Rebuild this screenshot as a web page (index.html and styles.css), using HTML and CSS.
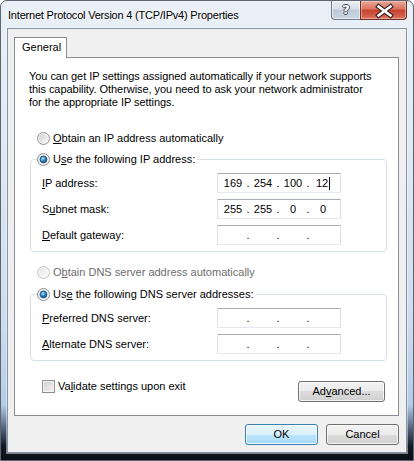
FILE: index.html
```html
<!DOCTYPE html>
<html>
<head>
<meta charset="utf-8">
<title>Internet Protocol Version 4 (TCP/IPv4) Properties</title>
<link rel="stylesheet" href="styles.css">
</head>
<body>
<svg class="defs" width="0" height="0" aria-hidden="true">
  <defs>
    <linearGradient id="rfill" x1="0" y1="0" x2="1" y2="1">
      <stop offset="0" stop-color="#cfcfcf"/>
      <stop offset="1" stop-color="#fbfbfb"/>
    </linearGradient>
    <linearGradient id="rfilld" x1="0" y1="0" x2="1" y2="1">
      <stop offset="0" stop-color="#e6e6e6"/>
      <stop offset="1" stop-color="#fbfbfb"/>
    </linearGradient>
    <radialGradient id="rdot" cx="0.4" cy="0.35" r="0.75">
      <stop offset="0" stop-color="#b5e4fb"/>
      <stop offset="0.45" stop-color="#2f8fd3"/>
      <stop offset="1" stop-color="#0c3b66"/>
    </radialGradient>
  </defs>
</svg>
<div class="window">
  <div class="titlebar">
    <div class="title">Internet Protocol Version 4 (TCP/IPv4) Properties</div>
    <div class="caption">
      <div class="cap-help">?</div>
      <div class="cap-close">
        <svg width="47" height="19" viewBox="0 0 47 19">
          <path d="M18.5 5.5 L30.5 14.5 M30.5 5.5 L18.5 14.5" stroke="#3a2420" stroke-width="4.8" stroke-linecap="square" fill="none"/>
          <path d="M18.5 5.5 L30.5 14.5 M30.5 5.5 L18.5 14.5" stroke="#ffffff" stroke-width="2.6" stroke-linecap="square" fill="none"/>
        </svg>
      </div>
    </div>
  </div>
  <div class="client">
    <div class="tabs"><div class="tab">General</div></div>
    <div class="panel">
      <p class="intro">You can get IP settings assigned automatically if your network supports<br>this capability. Otherwise, you need to ask your network administrator<br>for the appropriate IP settings.</p>

      <div class="opt opt-first">
        <svg class="rb" viewBox="0 0 13 13"><circle cx="6.5" cy="6.5" r="6" fill="#f4f4f4" stroke="#8f8f8f"/><circle cx="6.5" cy="6.5" r="4.6" fill="url(#rfill)"/></svg>
        <span><u>O</u>btain an IP address automatically</span>
      </div>

      <div class="group group-ip">
        <div class="opt legend">
          <svg class="rb" viewBox="0 0 13 13"><circle cx="6.5" cy="6.5" r="6" fill="#f4f4f4" stroke="#8f8f8f"/><circle cx="6.5" cy="6.5" r="4.6" fill="url(#rfill)"/><circle cx="6.5" cy="6.5" r="3.4" fill="url(#rdot)" stroke="#1c4a72" stroke-width="0.8"/></svg>
          <span>U<u>s</u>e the following IP address:</span>
        </div>
        <div class="rows">
          <div class="lbl"><u>I</u>P address:</div>
          <div class="ipbox"><span class="seg">169</span><span class="dot">.</span><span class="seg">254</span><span class="dot">.</span><span class="seg">100</span><span class="dot">.</span><span class="seg">12<span class="caret"></span></span></div>
          <div class="lbl">S<u>u</u>bnet mask:</div>
          <div class="ipbox"><span class="seg">255</span><span class="dot">.</span><span class="seg">255</span><span class="dot">.</span><span class="seg">0</span><span class="dot">.</span><span class="seg">0</span></div>
          <div class="lbl"><u>D</u>efault gateway:</div>
          <div class="ipbox"><span class="seg"></span><span class="dot">.</span><span class="seg"></span><span class="dot">.</span><span class="seg"></span><span class="dot">.</span><span class="seg"></span></div>
        </div>
      </div>

      <div class="opt opt-dns disabled">
        <svg class="rb" viewBox="0 0 13 13"><circle cx="6.5" cy="6.5" r="6" fill="#f7f7f7" stroke="#c4c4c4"/><circle cx="6.5" cy="6.5" r="4.6" fill="url(#rfilld)"/></svg>
        <span>O<u>b</u>tain DNS server address automatically</span>
      </div>

      <div class="group group-dns">
        <div class="opt legend">
          <svg class="rb" viewBox="0 0 13 13"><circle cx="6.5" cy="6.5" r="6" fill="#f4f4f4" stroke="#8f8f8f"/><circle cx="6.5" cy="6.5" r="4.6" fill="url(#rfill)"/><circle cx="6.5" cy="6.5" r="3.4" fill="url(#rdot)" stroke="#1c4a72" stroke-width="0.8"/></svg>
          <span>Us<u>e</u> the following DNS server addresses:</span>
        </div>
        <div class="rows">
          <div class="lbl"><u>P</u>referred DNS server:</div>
          <div class="ipbox"><span class="seg"></span><span class="dot">.</span><span class="seg"></span><span class="dot">.</span><span class="seg"></span><span class="dot">.</span><span class="seg"></span></div>
          <div class="lbl"><u>A</u>lternate DNS server:</div>
          <div class="ipbox"><span class="seg"></span><span class="dot">.</span><span class="seg"></span><span class="dot">.</span><span class="seg"></span><span class="dot">.</span><span class="seg"></span></div>
        </div>
      </div>

      <div class="bottom-row">
        <div class="check">
          <span class="cb"></span>
          <span>Va<u>l</u>idate settings upon exit</span>
        </div>
        <button class="btn btn-adv">Ad<u>v</u>anced...</button>
      </div>
    </div>
    <div class="actions">
      <button class="btn btn-default">OK</button>
      <button class="btn">Cancel</button>
    </div>
  </div>
</div>
</body>
</html>
```

FILE: styles.css
```css
* { box-sizing: border-box; }

html, body {
  margin: 0;
  padding: 0;
  background: #ffffff;
}

body {
  font-family: "Liberation Sans", Arial, sans-serif;
  font-size: 11px;
  color: #000;
}

.defs {
  position: absolute;
  width: 0;
  height: 0;
  overflow: hidden;
}

u {
  text-decoration: underline;
  text-underline-offset: 1px;
}

.window {
  width: 414px;
  height: 461px;
  border: 1px solid #5c6570;
  border-radius: 7px 7px 0 0;
  background: linear-gradient(to bottom,
      #eaf0f7 0%,
      #dfe8f2 35%,
      #cddced 70%,
      #b6cce5 88%,
      #4b5b72 93.5%,
      #141a23 97%,
      #0b0f15 100%);
  padding: 0 6px 7px 6px;
  display: flex;
  flex-direction: column;
  overflow: hidden;
}

.titlebar {
  height: 27px;
  flex: none;
  display: flex;
  justify-content: space-between;
  align-items: flex-start;
}

.title {
  margin-top: 7px;
  padding-left: 1px;
  font-size: 11px;
  line-height: 14px;
  letter-spacing: -0.2px;
  color: #000;
  text-shadow: 0 0 5px #fff, 0 0 9px #fff, 0 0 12px #fff;
}

.caption {
  display: flex;
}

.cap-help {
  width: 29px;
  height: 19px;
  border: 1px solid #6f7d8e;
  border-top: none;
  border-right: none;
  border-radius: 0 0 0 4px;
  background: linear-gradient(to bottom, #e9eef4 0%, #d6dfe9 45%, #bcc9d8 50%, #cbd7e4 100%);
  box-shadow: inset 0 0 0 1px rgba(255,255,255,0.55);
  color: #fff;
  font-family: "DejaVu Sans", sans-serif;
  font-weight: bold;
  font-size: 13px;
  line-height: 18px;
  text-align: center;
  text-shadow: 1px 0 0 #3d4a5a, -1px 0 0 #3d4a5a, 0 1px 0 #3d4a5a, 0 -1px 0 #3d4a5a;
}

.cap-close {
  width: 47px;
  height: 19px;
  border: 1px solid #6b2d26;
  border-top: none;
  border-radius: 0 0 4px 0;
  background: linear-gradient(to bottom, #e9a89c 0%, #d9735f 45%, #c7412f 50%, #d2604b 85%, #e0806b 100%);
  box-shadow: inset 0 0 0 1px rgba(255,220,210,0.45);
  overflow: hidden;
}

.cap-close svg {
  display: block;
  margin-left: -1px;
}

.client {
  flex: 1;
  border: 1px solid #8393a8;
  box-shadow: 0 0 0 1px rgba(255,255,255,0.45);
  background: #f0f0f0;
  padding: 8px 7px 0 6px;
  display: flex;
  flex-direction: column;
}

.tabs {
  display: flex;
  height: 20px;
}

.tab {
  position: relative;
  z-index: 1;
  width: 53px;
  height: 21px;
  border: 1px solid #898c95;
  border-bottom: none;
  background: #fff;
  padding-left: 7px;
  line-height: 19px;
}

.panel {
  width: 385px;
  height: 359px;
  border: 1px solid #898c95;
  background: #fff;
  padding: 12px 0 0 14px;
}

.intro {
  margin: 0;
  line-height: 13px;
  letter-spacing: -0.05px;
  white-space: nowrap;
}

.opt {
  display: flex;
  align-items: center;
  height: 16px;
  gap: 3px;
  white-space: nowrap;
}

.rb {
  width: 13px;
  height: 13px;
  flex: none;
  display: block;
}

.opt-first {
  margin-top: 21px;
  margin-left: 8px;
}

.opt-dns {
  margin-top: 12px;
  margin-left: 8px;
}

.disabled {
  color: #6d6d6d;
}

.group {
  margin-left: 1px;
  width: 357px;
  border: 1px solid #d5dfe5;
  border-radius: 4px;
  padding: 0 0 6px 11px;
}

.group-ip { margin-top: 13px; }
.group-dns { margin-top: 14px; }

.legend {
  margin-top: -9px;
  margin-left: -5px;
  width: max-content;
  background: #fff;
  padding-right: 2px;
}

.rows {
  margin-top: 6px;
  display: grid;
  grid-template-columns: 175px 124px;
  grid-auto-rows: 20px;
  row-gap: 6px;
  align-items: center;
}

.ipbox {
  height: 20px;
  border: 1px solid;
  border-color: #abadb3 #dbdfe6 #e3e9ef #e2e3ea;
  background: #fff;
  display: flex;
  align-items: center;
  padding-left: 3px;
  line-height: 14px;
}

.seg {
  width: 24px;
  text-align: center;
  white-space: nowrap;
}

.dot {
  width: 6px;
  text-align: center;
}

.caret {
  display: inline-block;
  width: 1px;
  height: 13px;
  background: #000;
  margin-left: 1px;
  vertical-align: -3px;
}

.bottom-row {
  margin-top: 17px;
  margin-left: 13px;
  margin-right: 13px;
  display: flex;
  justify-content: space-between;
  align-items: flex-start;
}

.check {
  display: flex;
  align-items: center;
  gap: 3px;
  height: 16px;
}

.cb {
  width: 13px;
  height: 13px;
  flex: none;
  border: 1px solid #8e8f8f;
  background: linear-gradient(135deg, #c9cbcd 0%, #e6e6e6 60%, #f6f6f6 100%);
  box-shadow: inset 0 0 0 1px #f4f4f4;
}

.btn {
  height: 21px;
  padding: 0;
  margin: 0;
  border: 1px solid #707070;
  border-radius: 3px;
  background: linear-gradient(to bottom, #f2f2f2 0%, #ebebeb 50%, #dddddd 50%, #cfcfcf 100%);
  box-shadow: inset 0 0 0 1px rgba(255,255,255,0.75);
  font-family: inherit;
  font-size: 11px;
  color: #000;
  line-height: 19px;
  text-align: center;
  width: 73px;
}

.btn-adv {
  width: 87px;
  margin-top: 3px;
}

.btn-default {
  border-color: #3c7fb1;
  background: linear-gradient(to bottom, #eaf6fd 0%, #d9f0fc 50%, #bee6fd 50%, #a7d9f5 100%);
}

.actions {
  margin-top: 8px;
  display: flex;
  justify-content: flex-end;
  gap: 8px;
}
```
